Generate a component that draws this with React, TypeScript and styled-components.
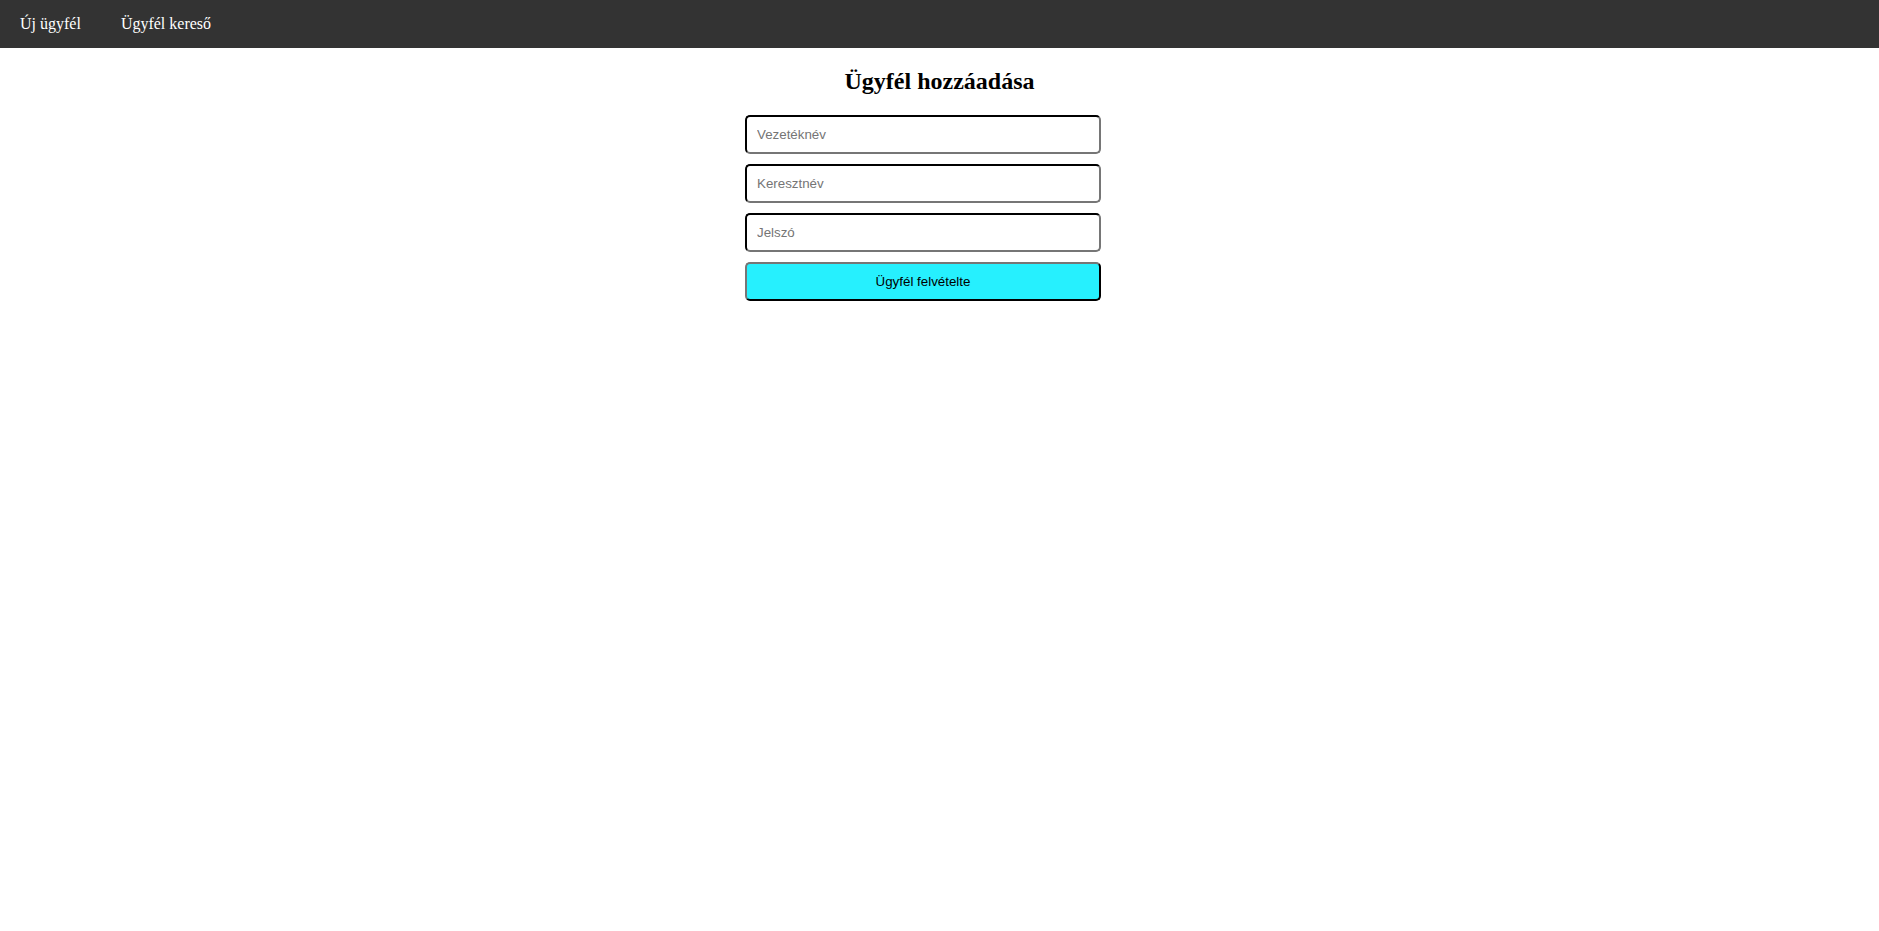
import styled, { createGlobalStyle } from "styled-components";

const GlobalStyle = createGlobalStyle`
  body {
    margin: 0;
    background: #fff;
    font-family: "Liberation Serif", "Times New Roman", serif;
  }
`;

const NavBar = styled.nav`
  display: flex;
  height: 48px;
  background: #333333;
`;

const NavLink = styled.a`
  display: block;
  padding: 0 20px;
  line-height: 48px;
  color: #fff;
  font-size: 16px;
  text-decoration: none;
  cursor: pointer;
`;

const Title = styled.h2`
  margin: 20px 0;
  text-align: center;
  font-size: 24px;
  font-weight: bold;
`;

const Form = styled.form`
  width: 389px;
  margin: 0 auto;
  display: flex;
  flex-direction: column;
  align-items: flex-start;
  gap: 10px;
`;

const Field = styled.input`
  width: 356px;
  height: 39px;
  box-sizing: border-box;
  padding: 10px;
  border: 2px inset #767676;
  border-color: #1e1e1e #767676 #767676 #1e1e1e;
  border-radius: 5px;
  font-family: "Liberation Sans", Arial, sans-serif;
  font-size: 13.33px;
  color: #000;
  &::placeholder {
    color: #757575;
  }
`;

const SubmitButton = styled.button`
  width: 356px;
  height: 39px;
  box-sizing: border-box;
  border: 2px outset #767676;
  border-color: #767676 #000 #000 #767676;
  border-radius: 5px;
  background: #26f0fe;
  color: #000;
  font-family: "Liberation Sans", Arial, sans-serif;
  font-size: 13.33px;
  cursor: pointer;
`;

export default function App() {
  return (
    <>
      <GlobalStyle />
      <NavBar>
        <NavLink>Új ügyfél</NavLink>
        <NavLink>Ügyfél kereső</NavLink>
      </NavBar>
      <Title>Ügyfél hozzáadása</Title>
      <Form onSubmit={(e) => e.preventDefault()}>
        <Field type="text" placeholder="Vezetéknév" />
        <Field type="text" placeholder="Keresztnév" />
        <Field type="password" placeholder="Jelszó" />
        <SubmitButton type="submit">Ügyfél felvételte</SubmitButton>
      </Form>
    </>
  );
}
